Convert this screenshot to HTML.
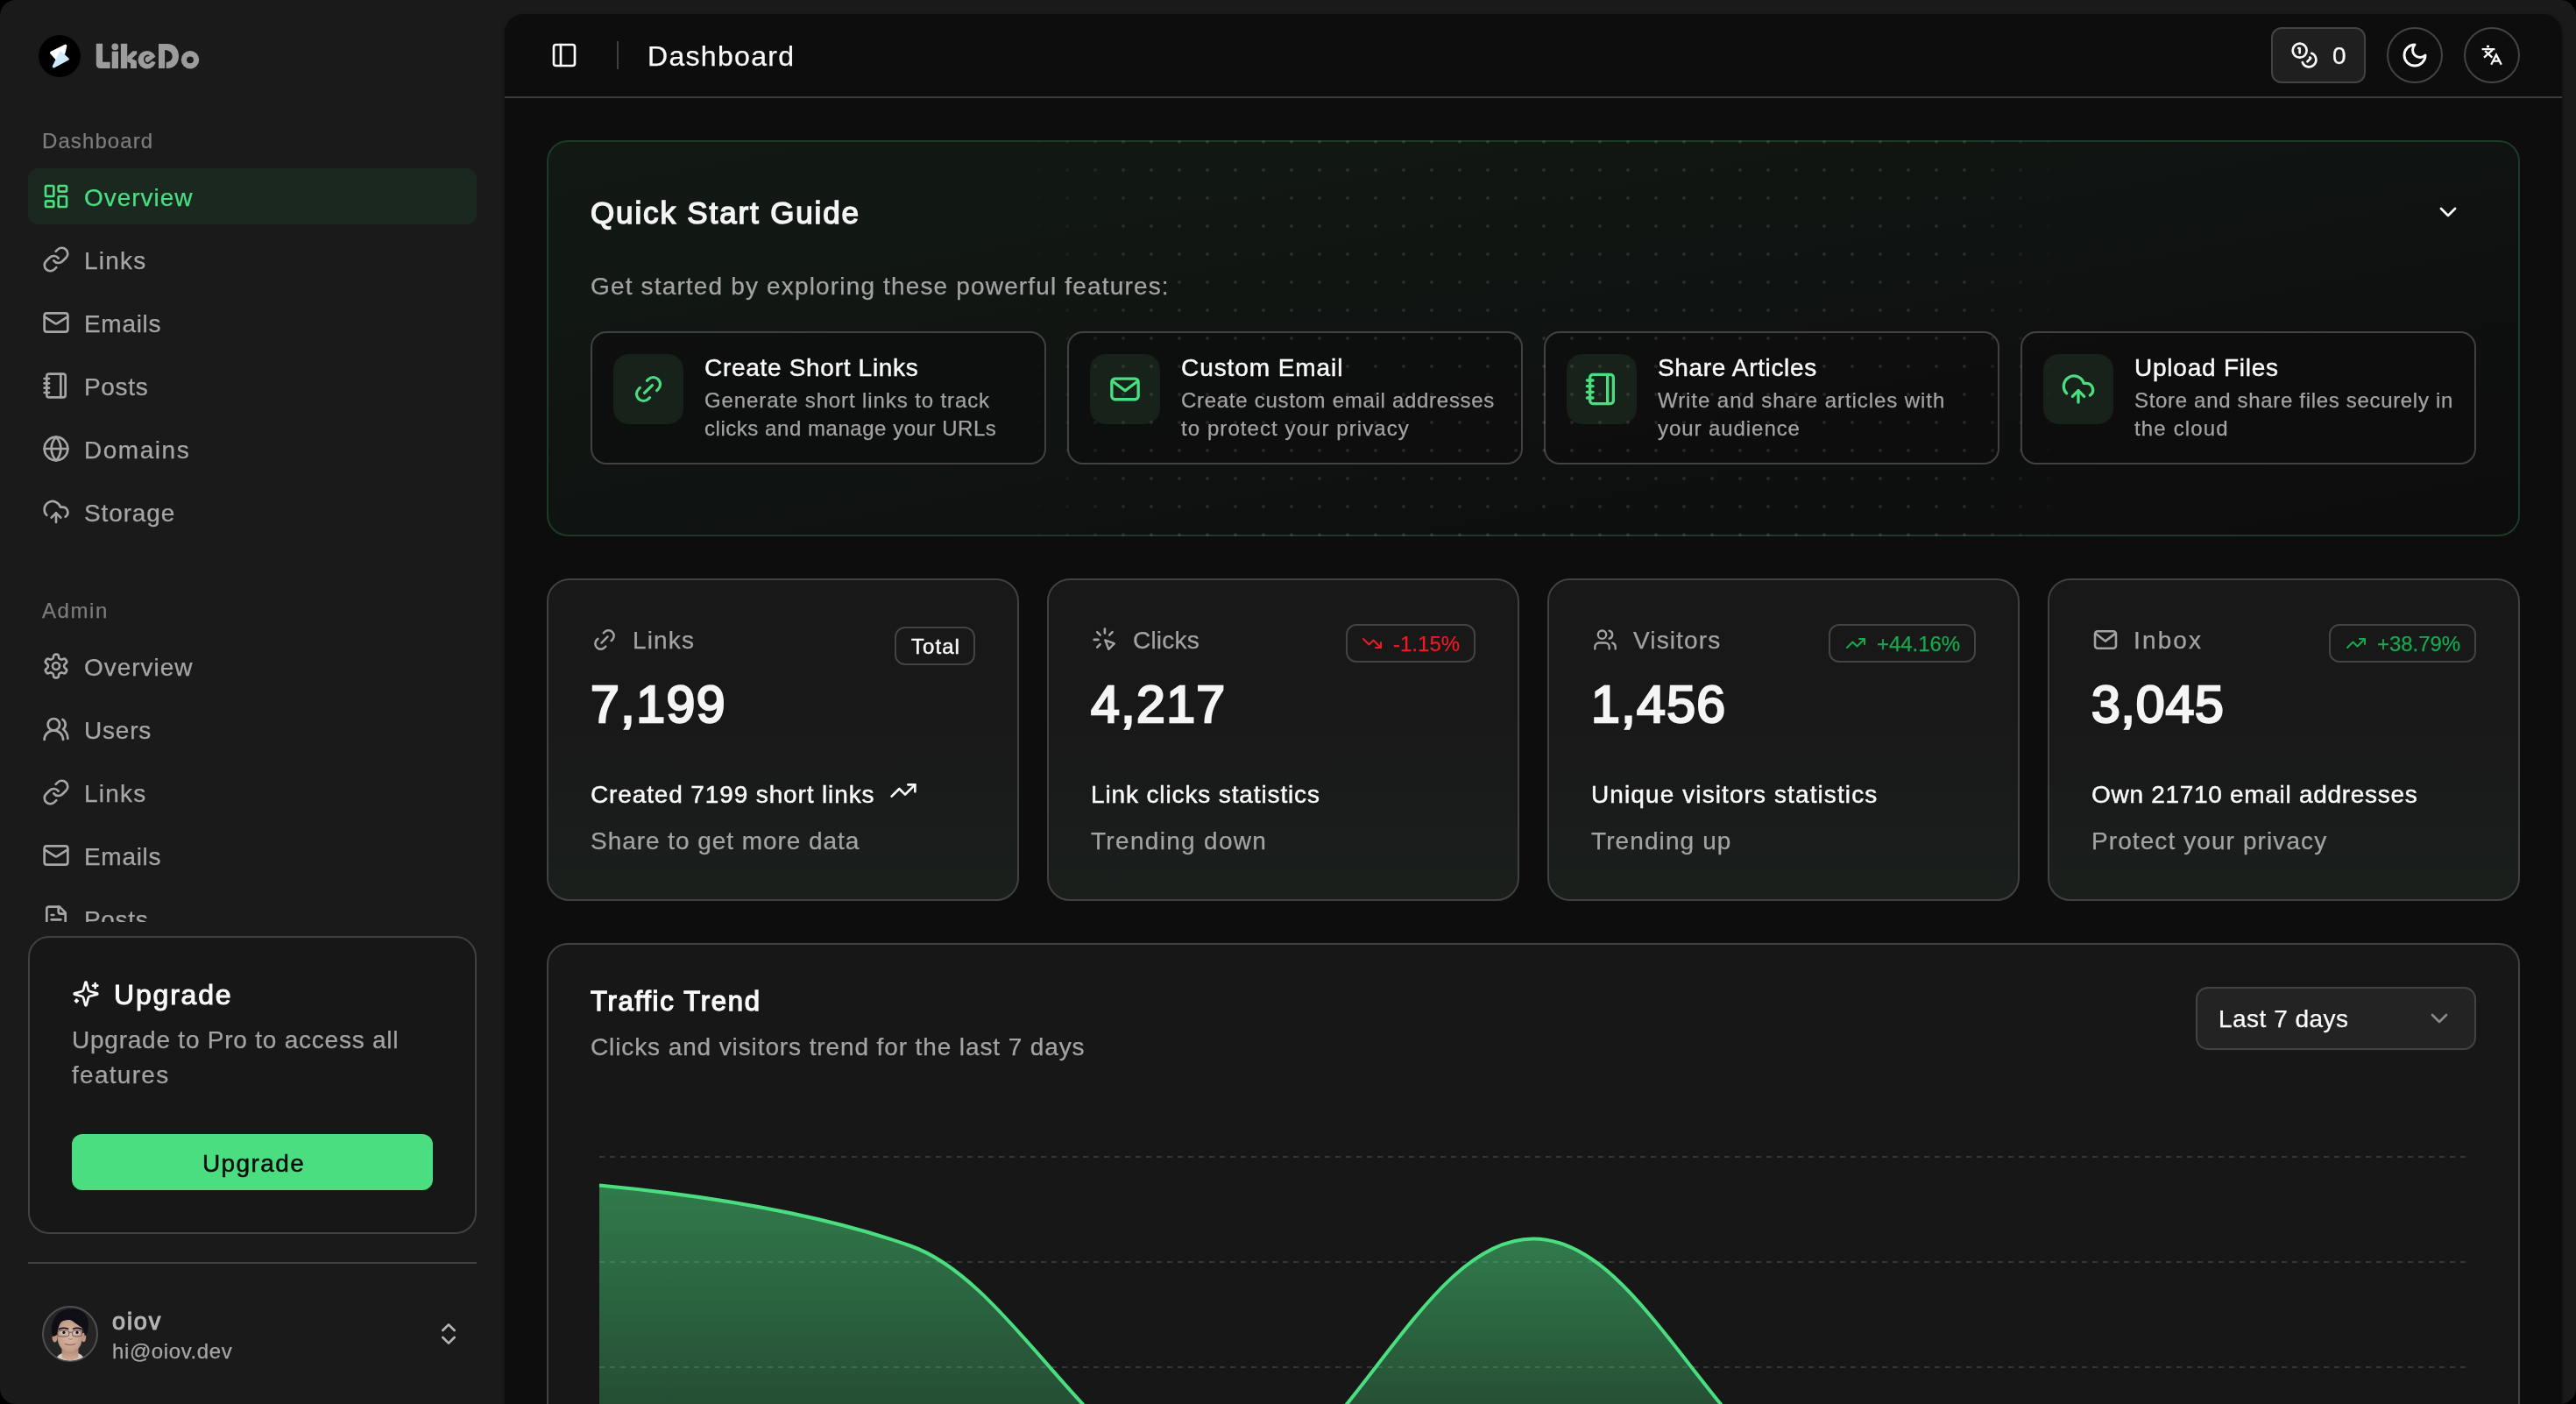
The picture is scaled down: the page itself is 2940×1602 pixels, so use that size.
<!DOCTYPE html>
<html lang="en">
<head>
<meta charset="utf-8">
<title>Dashboard - LikeDo</title>
<style>
*{box-sizing:border-box;margin:0;padding:0}
html,body{width:2940px;height:1602px;overflow:hidden;background:#000}
body{font-family:"Liberation Sans",sans-serif;color:#fafafa;position:relative;-webkit-font-smoothing:antialiased}
.abs{position:absolute}
.win{will-change:transform;position:absolute;left:0;top:0;width:2940px;height:1602px;background:#1a1a1a;border-radius:18px;overflow:hidden}
svg.ic{position:absolute;fill:none;stroke:currentColor;stroke-width:2;stroke-linecap:round;stroke-linejoin:round;overflow:visible}
.t{position:absolute;white-space:nowrap;line-height:1;-webkit-text-stroke:0.25px currentColor}
.md{-webkit-text-stroke:0.45px currentColor}
.md2{-webkit-text-stroke:1px currentColor}
.sb{font-weight:normal;-webkit-text-stroke:0.042em currentColor}
/* sidebar */
.glabel{font-size:24px;color:#7c7c7c}
.nav{font-size:28px;color:#a6a6a6}
.nav.on{color:#4ade80}
.navbg{position:absolute;left:32px;top:192px;width:512px;height:64px;border-radius:12px;background:#1a2820}
.sic{color:#a6a6a6}
/* main */
.main{position:absolute;left:576px;top:16px;width:2348px;height:1700px;background:#0d0d0d;border-radius:22px;overflow:hidden;box-shadow:0 1px 4px rgba(0,0,0,.35)}
.hdrline{position:absolute;left:0;top:94px;width:2348px;height:2px;background:#3b3b3b}
.muted{color:#a3a3a3}
.fc{position:absolute;top:362px;width:520px;height:152px;border:2px solid #414141;border-radius:18px;background:rgba(13,13,13,0.7)}
.fi{position:absolute;top:388px;width:80px;height:80px;border-radius:18px;background:#16221a}
.gi{color:#4ade80}
.ft{font-size:28px;color:#fafafa}
.fd{font-size:24px}
.sc{position:absolute;top:644px;width:539px;height:368px;border:2px solid #414141;border-radius:26px;background:linear-gradient(180deg,#181818 0%,#181818 40%,#1a1f1c 100%)}
.sl{font-size:28px;top:701px}
.sn{font-size:59px;top:759px;color:#f5f5f5}
.s1{font-size:28px;top:877px;color:#fafafa}
.s2{font-size:28px;top:930px}
.bd{position:absolute;height:44px;border:2px solid #434343;border-radius:12px}
/*LS-START*/
#s1{letter-spacing:1.09px}
#s2{letter-spacing:0.97px}
#s3{letter-spacing:1.25px}
#s4{letter-spacing:0.69px}
#s5{letter-spacing:0.68px}
#s6{letter-spacing:1.54px}
#s7{letter-spacing:0.88px}
#s8{letter-spacing:1.59px}
#s9{letter-spacing:0.97px}
#s10{letter-spacing:0.81px}
#s11{letter-spacing:1.25px}
#s12{letter-spacing:0.69px}
#s13{letter-spacing:0.68px}
#s14{letter-spacing:1.81px}
#s15{letter-spacing:0.77px}
#s16{letter-spacing:1.28px}
#s17{letter-spacing:1.39px}
#s18{letter-spacing:1.88px}
#s19{letter-spacing:0.61px}
#h1{letter-spacing:1.31px}
#q1{letter-spacing:1.86px}
#q2{letter-spacing:1.16px}
#f1{letter-spacing:0.70px}
#f2{letter-spacing:0.89px}
#f3{letter-spacing:0.54px}
#f4{letter-spacing:0.92px}
#f5{letter-spacing:0.71px}
#f6{letter-spacing:1.08px}
#f7{letter-spacing:0.65px}
#f8{letter-spacing:0.94px}
#f9{letter-spacing:0.93px}
#f10{letter-spacing:0.77px}
#f11{letter-spacing:0.68px}
#f12{letter-spacing:1.16px}
#c1{letter-spacing:1.15px}
#c6{letter-spacing:0.20px}
#c11{letter-spacing:1.12px}
#c16{letter-spacing:2.14px}
#c3{letter-spacing:1.50px}
#c8{letter-spacing:1.37px}
#c13{letter-spacing:1.37px}
#c18{letter-spacing:0.80px}
#c4{letter-spacing:0.87px}
#c9{letter-spacing:0.87px}
#c14{letter-spacing:1.10px}
#c19{letter-spacing:0.70px}
#c5{letter-spacing:0.95px}
#c10{letter-spacing:1.31px}
#c15{letter-spacing:1.10px}
#c20{letter-spacing:1.09px}
#c2{letter-spacing:1.05px}
#c7{letter-spacing:0.01px}
#c12{letter-spacing:-0.05px}
#c17{letter-spacing:-0.05px}
#g1{letter-spacing:1.72px}
#g2{letter-spacing:0.89px}
#g3{letter-spacing:0.49px}
/*LS-END*/
</style>
</head>
<body>
<div class="win">

<!-- ============ SIDEBAR ============ -->
<div id="sidebar" class="abs" style="left:0;top:0;width:576px;height:1602px">
  <!-- logo -->
  <svg class="abs" style="left:44px;top:40px" width="48" height="48" viewBox="0 0 48 48">
    <circle cx="24" cy="24" r="24" fill="#000"/>
    <path d="M30.8 12.2 L14.6 20.2 L20.6 27 L28.8 20.6 Z" fill="#fff" stroke="#fff" stroke-width="3.2" stroke-linejoin="round"/>
    <path d="M25.2 20.2 L33.2 27.4 L17.4 35.8 Z" fill="#cfeafc" stroke="#cfeafc" stroke-width="3.2" stroke-linejoin="round"/>
  </svg>
  <svg id="logotext" class="abs" style="left:108px;top:48px" width="124" height="34" viewBox="0 0 124 34" fill="#9c9c9c">
    <path d="M1.8 1.8h7.3v21h8.6v7.3H6.3a4.5 4.5 0 0 1-4.5-4.5z"/>
    <circle cx="23.3" cy="5.3" r="3.9"/><rect x="19.7" y="10.6" width="7.3" height="19.5"/>
    <rect x="29.9" y="1.8" width="7.3" height="28.3"/>
    <path d="M37.2 16.2 L43.6 10.2 H48.2 V13.6 L42.4 19 L47.9 21.4 V30.1 H41 V24.2 L37.2 22.6 Z"/>
    <circle cx="59.8" cy="20.3" r="10.3"/>
    <path d="M61.8 15.5C58.6 15.2 56.6 17.4 56.8 20.2C57 22.9 59 24.4 61.6 24" fill="none" stroke="#1a1a1a" stroke-width="1.7" stroke-linecap="round"/>
    <path d="M60.4 23.4 69.5 16.6 71.2 23.6 65.6 21.7 62.6 24.6Z" fill="#1a1a1a"/>
    <path d="M73 2h9.7c8.4 0 13.3 6.2 13.3 14s-4.9 14.1-13.3 14.1H73z"/>
    <path d="M80.1 9.1c5.3 .4 8.6 3.2 8.6 7.2s-2.6 6.3-7 6.8v7h-1.6z" fill="#1a1a1a"/>
    <circle cx="109" cy="20.3" r="10.2"/><circle cx="109" cy="20.3" r="3.9" fill="#1a1a1a"/>
  </svg>

  <span id="s1" class="t glabel" style="left:48px;top:149px">Dashboard</span>

  <div class="navbg"></div>
  <svg class="ic" style="left:48px;top:208px;color:#4ade80" width="32" height="32" viewBox="0 0 24 24"><rect width="7" height="9" x="3" y="3" rx="1"/><rect width="7" height="5" x="14" y="3" rx="1"/><rect width="7" height="9" x="14" y="12" rx="1"/><rect width="7" height="5" x="3" y="16" rx="1"/></svg>
  <span id="s2" class="t nav on" style="left:96px;top:212px">Overview</span>

  <svg class="ic sic" style="left:48px;top:280px" width="32" height="32" viewBox="0 0 24 24"><path d="M10 13a5 5 0 0 0 7.54.54l3-3a5 5 0 0 0-7.07-7.07l-1.72 1.71"/><path d="M14 11a5 5 0 0 0-7.54-.54l-3 3a5 5 0 0 0 7.07 7.07l1.71-1.71"/></svg>
  <span id="s3" class="t nav" style="left:96px;top:284px">Links</span>

  <svg class="ic sic" style="left:48px;top:352px" width="32" height="32" viewBox="0 0 24 24"><rect width="20" height="16" x="2" y="4" rx="2"/><path d="m22 7-8.97 5.7a1.94 1.94 0 0 1-2.06 0L2 7"/></svg>
  <span id="s4" class="t nav" style="left:96px;top:356px">Emails</span>

  <svg class="ic sic" style="left:48px;top:424px" width="32" height="32" viewBox="0 0 24 24"><path d="M2 6h4"/><path d="M2 10h4"/><path d="M2 14h4"/><path d="M2 18h4"/><rect width="16" height="20" x="4" y="2" rx="2"/><path d="M16 2v20"/></svg>
  <span id="s5" class="t nav" style="left:96px;top:428px">Posts</span>

  <svg class="ic sic" style="left:48px;top:496px" width="32" height="32" viewBox="0 0 24 24"><circle cx="12" cy="12" r="10"/><path d="M12 2a14.5 14.5 0 0 0 0 20 14.5 14.5 0 0 0 0-20"/><path d="M2 12h20"/></svg>
  <span id="s6" class="t nav" style="left:96px;top:500px">Domains</span>

  <svg class="ic sic" style="left:48px;top:568px" width="32" height="32" viewBox="0 0 24 24"><path d="M12 13v8"/><path d="M4 14.899A7 7 0 1 1 15.71 8h1.79a4.5 4.5 0 0 1 2.5 8.242"/><path d="m8 17 4-4 4 4"/></svg>
  <span id="s7" class="t nav" style="left:96px;top:572px">Storage</span>

  <span id="s8" class="t glabel" style="left:48px;top:685px">Admin</span>

  <svg class="ic sic" style="left:48px;top:744px" width="32" height="32" viewBox="0 0 24 24"><path d="M12.22 2h-.44a2 2 0 0 0-2 2v.18a2 2 0 0 1-1 1.73l-.43.25a2 2 0 0 1-2 0l-.15-.08a2 2 0 0 0-2.73.73l-.22.38a2 2 0 0 0 .73 2.73l.15.1a2 2 0 0 1 1 1.72v.51a2 2 0 0 1-1 1.74l-.15.09a2 2 0 0 0-.73 2.73l.22.38a2 2 0 0 0 2.73.73l.15-.08a2 2 0 0 1 2 0l.43.25a2 2 0 0 1 1 1.73V20a2 2 0 0 0 2 2h.44a2 2 0 0 0 2-2v-.18a2 2 0 0 1 1-1.73l.43-.25a2 2 0 0 1 2 0l.15.08a2 2 0 0 0 2.73-.73l.22-.39a2 2 0 0 0-.73-2.73l-.15-.08a2 2 0 0 1-1-1.74v-.5a2 2 0 0 1 1-1.74l.15-.09a2 2 0 0 0 .73-2.73l-.22-.38a2 2 0 0 0-2.73-.73l-.15.08a2 2 0 0 1-2 0l-.43-.25a2 2 0 0 1-1-1.73V4a2 2 0 0 0-2-2z"/><circle cx="12" cy="12" r="3"/></svg>
  <span id="s9" class="t nav" style="left:96px;top:748px">Overview</span>

  <svg class="ic sic" style="left:48px;top:816px" width="32" height="32" viewBox="0 0 24 24"><path d="M18 21a8 8 0 0 0-16 0"/><circle cx="10" cy="8" r="5"/><path d="M22 20c0-3.37-2-6.5-4-8a5 5 0 0 0-.45-8.3"/></svg>
  <span id="s10" class="t nav" style="left:96px;top:820px">Users</span>

  <svg class="ic sic" style="left:48px;top:888px" width="32" height="32" viewBox="0 0 24 24"><path d="M10 13a5 5 0 0 0 7.54.54l3-3a5 5 0 0 0-7.07-7.07l-1.72 1.71"/><path d="M14 11a5 5 0 0 0-7.54-.54l-3 3a5 5 0 0 0 7.07 7.07l1.71-1.71"/></svg>
  <span id="s11" class="t nav" style="left:96px;top:892px">Links</span>

  <svg class="ic sic" style="left:48px;top:960px" width="32" height="32" viewBox="0 0 24 24"><rect width="20" height="16" x="2" y="4" rx="2"/><path d="m22 7-8.97 5.7a1.94 1.94 0 0 1-2.06 0L2 7"/></svg>
  <span id="s12" class="t nav" style="left:96px;top:964px">Emails</span>

  <!-- clipped Posts row -->
  <div class="abs" style="left:0;top:1024px;width:576px;height:28px;overflow:hidden">
    <svg class="ic sic" style="left:48px;top:8px" width="32" height="32" viewBox="0 0 24 24"><path d="M15 2H6a2 2 0 0 0-2 2v16a2 2 0 0 0 2 2h12a2 2 0 0 0 2-2V7Z"/><path d="M14 2v4a2 2 0 0 0 2 2h4"/><path d="M10 9H8"/><path d="M16 13H8"/><path d="M16 17H8"/></svg>
    <span id="s13" class="t nav" style="left:96px;top:12px">Posts</span>
  </div>

  <!-- upgrade card -->
  <div class="abs" style="left:32px;top:1068px;width:512px;height:340px;border:2px solid #414141;border-radius:24px;background:#171717"></div>
  <svg class="ic" style="left:82px;top:1118px;color:#fafafa" width="32" height="32" viewBox="0 0 24 24"><path d="M9.937 15.5A2 2 0 0 0 8.5 14.063l-6.135-1.582a.5.5 0 0 1 0-.962L8.5 9.936A2 2 0 0 0 9.937 8.5l1.582-6.135a.5.5 0 0 1 .963 0L14.063 8.5A2 2 0 0 0 15.5 9.937l6.135 1.581a.5.5 0 0 1 0 .964L15.5 14.063a2 2 0 0 0-1.437 1.437l-1.582 6.135a.5.5 0 0 1-.963 0z"/><path d="M20 3v4"/><path d="M22 5h-4"/><path d="M4 17v2"/><path d="M5 18H3"/></svg>
  <span id="s14" class="t md2" style="left:130px;top:1119px;font-size:32px;color:#fafafa">Upgrade</span>
  <span id="s15" class="t muted" style="left:82px;top:1173px;font-size:28px">Upgrade to Pro to access all</span>
  <span id="s16" class="t muted" style="left:82px;top:1213px;font-size:28px">features</span>
  <div class="abs" style="left:82px;top:1294px;width:412px;height:64px;border-radius:12px;background:#4ade80"></div>
  <span id="s17" class="t md" style="left:231px;top:1314px;font-size:28px;color:#0a0a0a">Upgrade</span>

  <div class="abs" style="left:32px;top:1440px;width:512px;height:2px;background:#414141"></div>

  <!-- avatar -->
  <svg class="abs" style="left:48px;top:1490px" width="64" height="64" viewBox="0 0 64 64">
    <defs><clipPath id="avc"><circle cx="32" cy="32" r="30.6"/></clipPath>
    <radialGradient id="sk" cx="0.5" cy="0.5" r="0.62"><stop offset="0" stop-color="#d9b9a3"/><stop offset="0.7" stop-color="#c4a08b"/><stop offset="1" stop-color="#a27a69"/></radialGradient>
    <linearGradient id="nk" x1="0" y1="0" x2="0" y2="1"><stop offset="0" stop-color="#a77d6b"/><stop offset="1" stop-color="#d3ad98"/></linearGradient></defs>
    <circle cx="32" cy="32" r="31" fill="#242424" stroke="#4e4e4e" stroke-width="2"/>
    <g clip-path="url(#avc)">
      <path d="M15 66C16 57 20 54.5 25 53.5H39C44 54.5 48 57 49 66Z" fill="#d6d1c6"/>
      <path d="M22.5 46V59Q32 66 41.5 59V46Z" fill="url(#nk)"/>
      <ellipse cx="14.6" cy="36.4" rx="3" ry="5.2" fill="#c0957f"/><ellipse cx="47.4" cy="36" rx="2.8" ry="5.2" fill="#c0957f"/>
      <path d="M17 30C17 20 24 14.5 32 14.5S46 20 46 30L45.4 40C44.4 48 38 53.6 32 53.6S19.4 48 18 40Z" fill="url(#sk)"/>
      <path d="M12.2 35C8 22 14 4.500 33 3.6C49 3 55 14 52.400 27C52 30.500 50.500 33 48.600 34.500C48.800 30 47.600 26.500 45.400 24.500C40 22 36 17.500 32 16C28 15.600 24 16.500 21.500 18.500C19 22 18 27 17.600 32.500C16 34 14 35 12.200 35Z" fill="#0f0d15"/>
      <path d="M19.4 26.6Q24.4 24.2 29.6 26.200" stroke="#17141c" stroke-width="1.7" fill="none" stroke-linecap="round"/>
      <path d="M35.6 26.200Q40.200 24.400 45 26.600" stroke="#17141c" stroke-width="1.7" fill="none" stroke-linecap="round"/>
      <ellipse cx="24.6" cy="30.4" rx="3.300" ry="1.9" fill="#d9d2d0"/><circle cx="24.9" cy="30.4" r="1.700" fill="#13151b"/>
      <ellipse cx="39.700" cy="30.4" rx="3.300" ry="1.9" fill="#d9d2d0"/><circle cx="40" cy="30.4" r="1.700" fill="#13151b"/>
      <rect x="17.800" y="28.3" width="13" height="6.6" rx="2.200" fill="none" stroke="#6d4c55" stroke-width=".9"/>
      <rect x="34.600" y="28.3" width="10.800" height="6.6" rx="2.200" fill="none" stroke="#6d4c55" stroke-width=".9"/>
      <path d="M30.800 30.200H34.600" stroke="#6d4c55" stroke-width=".9"/>
      <path d="M30.400 37.600Q32.500 39.200 34.600 37.600" stroke="#a07764" stroke-width="1" fill="none"/>
      <path d="M26.400 43.600Q32 45.700 37.600 43.600" stroke="#96686a" stroke-width="1.300" fill="none" stroke-linecap="round"/>
    </g>
  </svg>
  <span id="s18" class="t sb" style="left:128px;top:1495px;font-size:27px;color:#b4b4b4">oiov</span>
  <span id="s19" class="t" style="left:128px;top:1530px;font-size:24px;color:#a6a6a6">hi@oiov.dev</span>
  <svg class="ic" style="left:496px;top:1506px;color:#b4b4b4" width="32" height="32" viewBox="0 0 24 24"><path d="m7 15 5 5 5-5"/><path d="m7 9 5-5 5 5"/></svg>
</div>

<!-- ============ MAIN ============ -->
<div class="main">
  <!-- header -->
  <div class="hdrline"></div>
  <svg class="ic" style="left:52px;top:31px;color:#fafafa" width="32" height="32" viewBox="0 0 24 24"><rect width="18" height="18" x="3" y="3" rx="2"/><path d="M9 3v18"/></svg>
  <div class="abs" style="left:128px;top:31px;width:2px;height:32px;background:#3f3f3f"></div>
  <span id="h1" class="t" style="left:163px;top:32px;font-size:32px;color:#fafafa">Dashboard</span>

  <div class="abs" style="left:2016px;top:15px;width:108px;height:64px;border-radius:12px;background:#1f1f1f;border:2px solid #434343"></div>
  <svg class="ic" style="left:2038px;top:31px;color:#fafafa" width="32" height="32" viewBox="0 0 24 24"><circle cx="8" cy="8" r="6"/><path d="M18.09 10.37A6 6 0 1 1 10.34 18"/><path d="M7 6h1v4"/><path d="m16.71 13.88.7.71-2.82 2.82"/></svg>
  <span id="h2" class="t" style="left:2086px;top:34px;font-size:28px;color:#fafafa">0</span>

  <div class="abs" style="left:2148px;top:15px;width:64px;height:64px;border-radius:50%;border:2px solid #444"></div>
  <svg class="ic" style="left:2164px;top:31px;color:#fafafa;stroke-width:2.2" width="32" height="32" viewBox="0 0 24 24"><path d="M12 3a6 6 0 0 0 9 9 9 9 0 1 1-9-9Z"/></svg>

  <div class="abs" style="left:2236px;top:15px;width:64px;height:64px;border-radius:50%;border:2px solid #444"></div>
  <svg class="abs" style="left:2252px;top:31px;fill:none;stroke:#fafafa;stroke-width:2.3;stroke-linecap:butt;stroke-linejoin:miter" width="32" height="32" viewBox="0 0 32 32"><path d="M10 6h3"/><path d="M4.6 9.2H19.4"/><path d="M7 18.6 16.8 9.8"/><path d="M8.2 11.2 16.4 18.6"/><path d="M15.2 26.8 21 15.6 26.8 26.8"/><path d="M17.6 22.6H24.4"/></svg>

  <!-- quick start -->
  <div id="qs" class="abs" style="left:48px;top:144px;width:2252px;height:452px;border:2px solid #1d3a28;border-radius:24px;overflow:hidden;background:linear-gradient(to bottom right,#121914 0%,#111713 22%,#0f1311 50%,#0e100f 70%,#0d0d0d 100%)">
    
  </div>
  <span id="q1" class="t sb" style="left:98px;top:209px;font-size:35px;color:#f5f5f5">Quick Start Guide</span>
  <svg class="ic" style="left:2202px;top:210px;color:#fafafa" width="32" height="32" viewBox="0 0 24 24"><path d="m6 9 6 6 6-6"/></svg>
  <span id="q2" class="t muted" style="left:98px;top:297px;font-size:28px">Get started by exploring these powerful features:</span>
  <!-- feature cards -->
  <div class="fc" style="left:98px"></div><div class="fc" style="left:642px"></div><div class="fc" style="left:1186px"></div><div class="fc" style="left:1730px"></div>
  <div class="fi" style="left:124px"></div><div class="fi" style="left:668px"></div><div class="fi" style="left:1212px"></div><div class="fi" style="left:1756px"></div>

  <div class="abs" style="left:48px;top:144px;width:2252px;height:452px;border-radius:24px;background-image:radial-gradient(circle,rgba(255,255,255,0.10) 1.5px,transparent 2.4px);background-size:32px 32px;background-position:2px 18px;-webkit-mask-image:linear-gradient(90deg,transparent 24%,#000 30%,#000 72%,transparent 77%);mask-image:linear-gradient(90deg,transparent 24%,#000 30%,#000 72%,transparent 77%)"></div>
  <svg class="ic gi" style="left:145px;top:409px" width="38" height="38" viewBox="0 0 24 24"><g transform="rotate(-45 12 12)"><path d="M8.4 17H7A5 5 0 0 1 7 7h1.4"/><path d="M15.6 7H17a5 5 0 1 1 0 10h-1.400"/><line x1="8" x2="16" y1="12" y2="12"/></g></svg>
  <span id="f1" class="t md ft" style="left:228px;top:390px">Create Short Links</span>
  <span id="f2" class="t muted fd" style="left:228px;top:429px">Generate short links to track</span>
  <span id="f3" class="t muted fd" style="left:228px;top:461px">clicks and manage your URLs</span>

  <svg class="ic gi" style="left:688px;top:408px;stroke-width:3.3" width="40" height="40" viewBox="0 0 40 40"><rect x="4.850" y="8.150" width="30.300" height="23.600" rx="3.800"/><path d="M5.800 11 20.100 21.800 34.400 11"/></svg>
  <span id="f4" class="t md ft" style="left:772px;top:390px">Custom Email</span>
  <span id="f5" class="t muted fd" style="left:772px;top:429px">Create custom email addresses</span>
  <span id="f6" class="t muted fd" style="left:772px;top:461px">to protect your privacy</span>

  <svg class="ic gi" style="left:1232px;top:408px" width="40" height="40" viewBox="0 0 24 24"><path d="M2 6h4"/><path d="M2 10h4"/><path d="M2 14h4"/><path d="M2 18h4"/><rect width="16" height="20" x="4" y="2" rx="2"/><path d="M16 2v20"/></svg>
  <span id="f7" class="t md ft" style="left:1316px;top:390px">Share Articles</span>
  <span id="f8" class="t muted fd" style="left:1316px;top:429px">Write and share articles with</span>
  <span id="f9" class="t muted fd" style="left:1316px;top:461px">your audience</span>

  <svg class="ic gi" style="left:1776px;top:408px" width="40" height="40" viewBox="0 0 24 24"><path d="M12 13v8"/><path d="M4 14.899A7 7 0 1 1 15.71 8h1.79a4.5 4.5 0 0 1 2.5 8.242"/><path d="m8 17 4-4 4 4"/></svg>
  <span id="f10" class="t md ft" style="left:1860px;top:390px">Upload Files</span>
  <span id="f11" class="t muted fd" style="left:1860px;top:429px">Store and share files securely in</span>
  <span id="f12" class="t muted fd" style="left:1860px;top:461px">the cloud</span>

  <!-- stat cards -->
  <div class="sc" style="left:48px"></div><div class="sc" style="left:619px"></div><div class="sc" style="left:1190px"></div><div class="sc" style="left:1761px"></div>

  <svg class="ic muted" style="left:99px;top:699px" width="30" height="30" viewBox="0 0 24 24"><g transform="rotate(-45 12 12)"><path d="M8.4 17H7A5 5 0 0 1 7 7h1.4"/><path d="M15.6 7H17a5 5 0 1 1 0 10h-1.400"/><line x1="8" x2="16" y1="12" y2="12"/></g></svg>
  <span id="c1" class="t muted sl" style="left:146px">Links</span>
  <div class="bd" style="left:445px;top:699px;width:92px"></div>
  <span id="c2" class="t md" style="left:464px;top:710px;font-size:24px;color:#fafafa">Total</span>
  <span id="c3" class="t sb sn" style="left:98px">7,199</span>
  <span id="c4" class="t md s1" style="left:98px">Created 7199 short links</span>
  <svg class="ic" style="left:439px;top:870px;color:#fafafa" width="32" height="32" viewBox="0 0 24 24"><polyline points="22 7 13.5 15.5 8.5 10.5 2 17"/><polyline points="16 7 22 7 22 13"/></svg>
  <span id="c5" class="t muted s2" style="left:98px">Share to get more data</span>

  <svg class="ic muted" style="left:669px;top:698px;stroke-width:2.6" width="32" height="32" viewBox="0 0 32 32"><path d="M15.9 3.600V8.500"/><path d="M7.200 7.200 10.700 10.700"/><path d="M24.600 7.200 21.200 10.600"/><path d="M3.700 15.900H8.400"/><path d="M7.200 24.600 10.600 21.200"/><path d="M16.300 16.300 26.800 20.300 20.300 26.800Z" stroke-width="2.4"/></svg>
  <span id="c6" class="t muted sl" style="left:717px">Clicks</span>
  <div class="bd" style="left:960px;top:696px;width:148px"></div>
  <svg class="ic" style="left:978px;top:706px;color:#ef1a24" width="24" height="24" viewBox="0 0 24 24"><polyline points="22 17 13.5 8.5 8.5 13.5 2 7"/><polyline points="16 17 22 17 22 11"/></svg>
  <span id="c7" class="t" style="left:1014px;top:707px;font-size:24px;color:#ef1a24">-1.15%</span>
  <span id="c8" class="t sb sn" style="left:669px">4,217</span>
  <span id="c9" class="t md s1" style="left:669px">Link clicks statistics</span>
  <span id="c10" class="t muted s2" style="left:669px">Trending down</span>

  <svg class="ic muted" style="left:1242px;top:700px" width="28" height="28" viewBox="0 0 24 24"><path d="M16 21v-2a4 4 0 0 0-4-4H6a4 4 0 0 0-4 4v2"/><circle cx="9" cy="7" r="4"/><path d="M22 21v-2a4 4 0 0 0-3-3.87"/><path d="M16 3.13a4 4 0 0 1 0 7.75"/></svg>
  <span id="c11" class="t muted sl" style="left:1288px">Visitors</span>
  <div class="bd" style="left:1511px;top:696px;width:168px"></div>
  <svg class="ic" style="left:1530px;top:706px;color:#17a94d" width="24" height="24" viewBox="0 0 24 24"><polyline points="22 7 13.5 15.5 8.5 10.5 2 17"/><polyline points="16 7 22 7 22 13"/></svg>
  <span id="c12" class="t" style="left:1566px;top:707px;font-size:24px;color:#17a94d">+44.16%</span>
  <span id="c13" class="t sb sn" style="left:1240px">1,456</span>
  <span id="c14" class="t md s1" style="left:1240px">Unique visitors statistics</span>
  <span id="c15" class="t muted s2" style="left:1240px">Trending up</span>

  <svg class="ic muted" style="left:1813px;top:700px;stroke-width:2.6" width="28" height="28" viewBox="0 0 28 28"><rect x="2.050" y="4.200" width="23.900" height="19.600" rx="3"/><path d="M2.900 6.900 13.800 15.600 25.100 6.900"/></svg>
  <span id="c16" class="t muted sl" style="left:1859px">Inbox</span>
  <div class="bd" style="left:2082px;top:696px;width:168px"></div>
  <svg class="ic" style="left:2101px;top:706px;color:#17a94d" width="24" height="24" viewBox="0 0 24 24"><polyline points="22 7 13.5 15.5 8.5 10.5 2 17"/><polyline points="16 7 22 7 22 13"/></svg>
  <span id="c17" class="t" style="left:2137px;top:707px;font-size:24px;color:#17a94d">+38.79%</span>
  <span id="c18" class="t sb sn" style="left:1811px">3,045</span>
  <span id="c19" class="t md s1" style="left:1811px">Own 21710 email addresses</span>
  <span id="c20" class="t muted s2" style="left:1811px">Protect your privacy</span>

  <!-- chart card -->
  <div class="abs" style="left:48px;top:1060px;width:2252px;height:700px;border:2px solid #414141;border-radius:24px;background:#171717"></div>
  <span id="g1" class="t sb" style="left:98px;top:1111px;font-size:31px;color:#fafafa">Traffic Trend</span>
  <span id="g2" class="t muted" style="left:98px;top:1165px;font-size:28px">Clicks and visitors trend for the last 7 days</span>
  <div class="abs" style="left:1930px;top:1110px;width:320px;height:72px;border-radius:14px;border:2px solid #434343;background:#232323"></div>
  <span id="g3" class="t" style="left:1956px;top:1133px;font-size:28px;color:#fafafa">Last 7 days</span>
  <svg class="ic" style="left:2192px;top:1130px;color:#8a8a8a" width="32" height="32" viewBox="0 0 24 24"><path d="m6 9 6 6 6-6"/></svg>
  <svg class="abs" style="left:48px;top:1260px" width="2252" height="340" viewBox="624 1276 2252 340">
    <defs><linearGradient id="ag" x1="0" y1="0" x2="0" y2="1"><stop offset="0" stop-color="#4ade80" stop-opacity="0.5"/><stop offset="1" stop-color="#4ade80" stop-opacity="0.24"/></linearGradient></defs>
    <g stroke="#363636" stroke-width="2" stroke-dasharray="6 6"><path d="M684 1320H2814"/><path d="M684 1440H2814"/><path d="M684 1560H2814"/></g>
    <g transform="translate(0 1.5)"><path id="area" d="M684 1351 C 810 1363 940 1385 1039 1420 C 1110 1445 1170 1530 1237 1602 L1237 1640 L684 1640 Z" fill="url(#ag)"/>
    <path id="area2" d="M1536 1602 C 1610 1510 1670 1412 1750 1412 C 1830 1412 1890 1510 1965 1602 L1965 1640 L1536 1640 Z" fill="url(#ag)"/>
    <path d="M684 1351 C 810 1363 940 1385 1039 1420 C 1110 1445 1170 1530 1237 1602 L1260 1630" fill="none" stroke="#4ade80" stroke-width="4"/>
    <path d="M1515 1630 L1536 1602 C 1610 1510 1670 1412 1750 1412 C 1830 1412 1890 1510 1965 1602 L1990 1630" fill="none" stroke="#4ade80" stroke-width="4"/></g>
  </svg>
</div>

</div>
</body>
</html>
